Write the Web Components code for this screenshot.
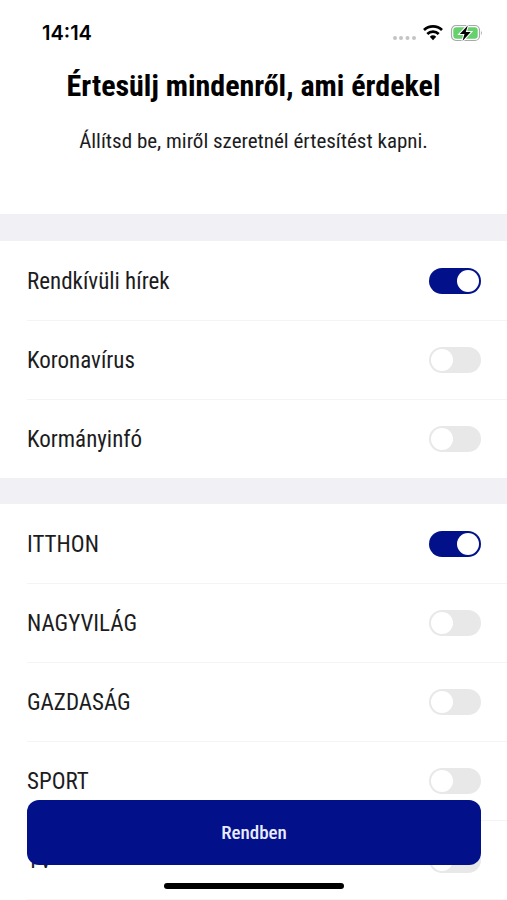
<!DOCTYPE html>
<html lang="hu">
<head>
<meta charset="utf-8">
<meta name="viewport" content="width=device-width, initial-scale=1">
<title>Értesítések</title>
<style>
  body {
    margin: 0;
    background: #fff;
    color: #1c1c1e;
    font-family: "Roboto Condensed", "Liberation Sans Narrow", Roboto, sans-serif;
    --brand: #02108a;
    --band: #f0f0f5;
    --line: #f4f4f5;
    --edge: 27px;
  }
</style>
</head>
<body>
<notification-settings></notification-settings>
<script>
const define = (name, html, setup) => {
  const template = document.createElement('template');
  template.innerHTML = html;
  customElements.define(name, class extends HTMLElement {
    connectedCallback() {
      if (this.shadowRoot) return;
      this.attachShadow({ mode: 'open' }).append(template.content.cloneNode(true));
      if (setup) setup(this, this.shadowRoot);
    }
  });
};

define('status-bar', `
  <style>
    :host { display: flex; align-items: center; justify-content: space-between; height: 66px; padding: 0 24px 0 42px; box-sizing: border-box; color: #000; }
    time { font: 600 20px/24px Inter, sans-serif; }
    .icons { display: flex; align-items: center; gap: 7px; }
    svg { display: block; }
  </style>
  <time>14:14</time>
  <div class="icons">
    <svg width="23" height="18" viewBox="0 0 23 18" fill="#c4c4c6" aria-hidden="true">
      <circle cx="2" cy="14" r="2"/><circle cx="8" cy="14" r="2"/><circle cx="14.500" cy="14" r="2"/><circle cx="21" cy="14" r="2"/>
    </svg>
    <svg width="20" height="18" viewBox="0 0 20 18" aria-hidden="true">
      <g fill="none" stroke="#000" stroke-width="2.700">
        <path d="M1 6a12.800 12.800 0 0 1 18 0"/>
        <path d="M4.300 10a8 8 0 0 1 11.400 0"/>
      </g>
      <path d="M6.800 12.800a4.800 4.800 0 0 1 6.400 0L10 16.300z"/>
    </svg>
    <svg width="33" height="18" viewBox="0 0 33 18" aria-hidden="true">
      <rect x="1.500" y="1.500" width="28" height="15" rx="4.500" fill="#fff" stroke="#a9a9ab" stroke-width="1.200"/>
      <rect x="3.300" y="3.300" width="24.400" height="11.400" rx="3" fill="#65d06c"/>
      <path d="M31 6.800q1.800 2.200 0 4.400z" fill="#a0a0a2"/>
      <path d="M17.800 1.500 9.800 10h4.700l-2 7 8.200-9h-4.900z" fill="#000" stroke="#fff" stroke-width="2.200" paint-order="stroke"/>
    </svg>
  </div>`);

define('page-intro', `
  <style>
    :host { display: block; padding: 0 var(--edge) 58px; text-align: center; }
    h1 { margin: 0 0 20px; font-size: 30px; line-height: 40px; font-weight: 700; color: #000; }
    p { margin: 0; font-size: 21px; line-height: 30px; }
  </style>
  <h1><slot name="title"></slot></h1>
  <p><slot></slot></p>`);

define('toggle-row', `
  <style>
    :host { display: block; padding-left: var(--edge); }
    label { display: flex; align-items: center; justify-content: space-between; height: 79px; padding-right: 26px; box-sizing: border-box; border-top: 1px solid var(--line); font-size: 23px; line-height: 30px; }
    :host(:first-of-type) label { border-color: transparent; }
    span { padding-top: 2px; }
    input { appearance: none; flex: none; display: grid; align-items: center; width: 52px; height: 26px; margin: 0; padding: 0 2px; box-sizing: border-box; border-radius: 13px; background: #e8e8e8; }
    input::before { content: ""; width: 22px; height: 22px; border-radius: 50%; background: #fff; }
    input:checked { background: var(--brand); justify-items: end; }
  </style>
  <label><span><slot></slot></span><input type="checkbox" role="switch"></label>`,
  (host, root) => { root.querySelector('input').checked = host.hasAttribute('on'); });

define('toggle-group', `
  <style>
    :host { display: block; border-top: 26px solid var(--band); }
    hr { margin: 0 0 0 var(--edge); border: 0; height: 1px; background: var(--line); }
    :host(.first) hr { display: none; }
  </style>
  <slot></slot>
  <hr>`);

define('action-bar', `
  <style>
    :host { position: fixed; left: 0; right: 0; bottom: 0; display: flex; flex-direction: column; align-items: center; gap: 18px; padding: 0 26px 11px var(--edge); }
    button { width: 100%; height: 65px; border: 0; border-radius: 12px; background: var(--brand); color: #e9ebff; font: 500 19px/28px "Roboto Condensed", "Liberation Sans Narrow", Roboto, sans-serif; }
    i { width: 180px; height: 6px; border-radius: 3px; background: #000; }
  </style>
  <button type="button"><slot></slot></button>
  <i></i>`);

define('notification-settings', `
  <style>
    :host { display: block; }
    .first { border-top-width: 27px; }
  </style>
  <status-bar></status-bar>
  <main>
    <page-intro><span slot="title">Értesülj mindenről, ami érdekel</span>Állítsd be, miről szeretnél értesítést kapni.</page-intro>
    <toggle-group class="first">
      <toggle-row on>Rendkívüli hírek</toggle-row>
      <toggle-row>Koronavírus</toggle-row>
      <toggle-row>Kormányinfó</toggle-row>
    </toggle-group>
    <toggle-group>
      <toggle-row on>ITTHON</toggle-row>
      <toggle-row>NAGYVILÁG</toggle-row>
      <toggle-row>GAZDASÁG</toggle-row>
      <toggle-row>SPORT</toggle-row>
      <toggle-row>TV</toggle-row>
    </toggle-group>
  </main>
  <action-bar>Rendben</action-bar>`);
</script>
</body>
</html>
